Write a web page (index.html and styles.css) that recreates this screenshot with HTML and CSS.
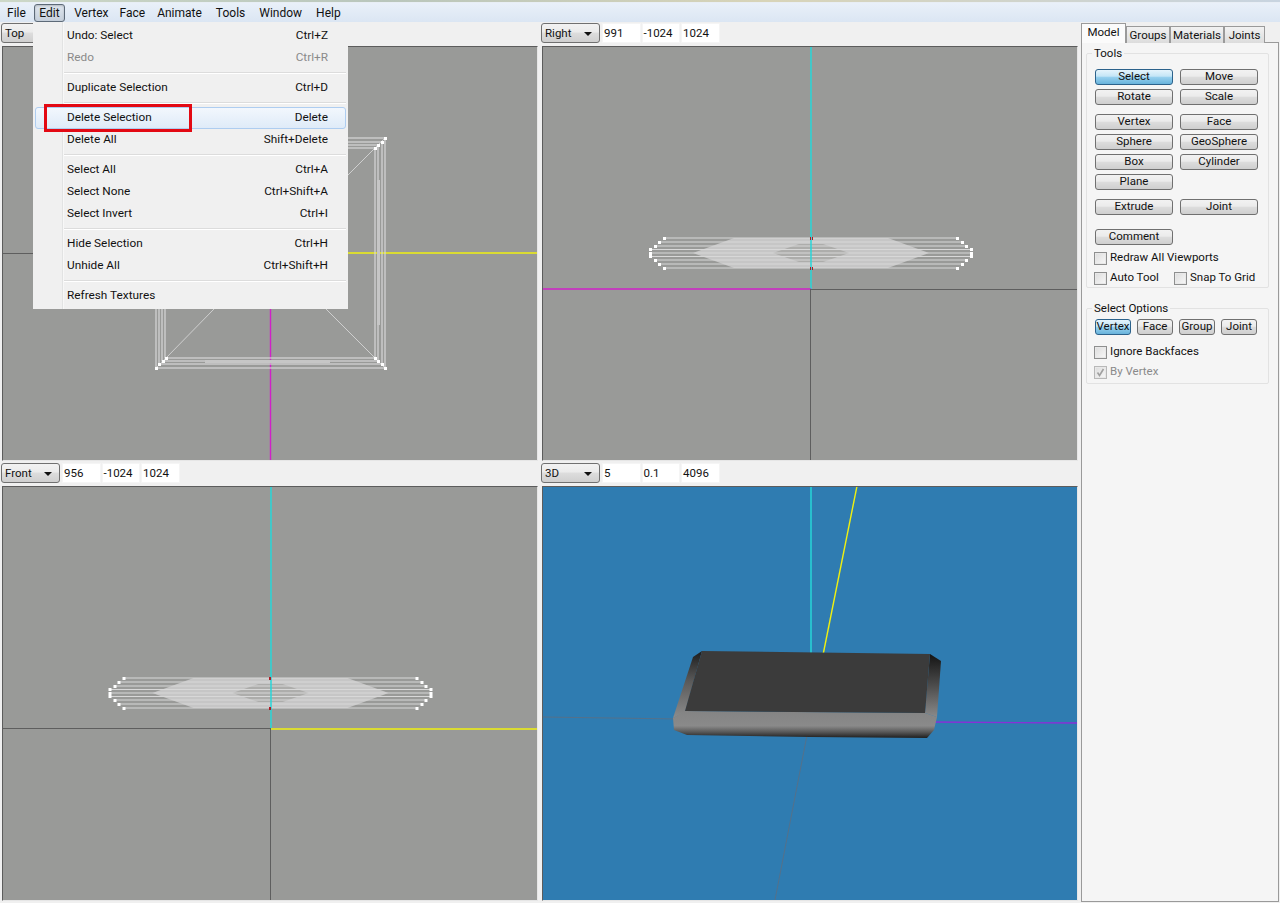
FILE: index.html
```html
<!DOCTYPE html>
<html lang="en">
<head>
<meta charset="utf-8">
<title>Model editor</title>
<link rel="stylesheet" href="styles.css">
</head>
<body>
<svg class="defs" width="0" height="0" aria-hidden="true">
  <defs>
    <g id="stadium">
      <polygon class="w-fill" points="-77,-15 77,-15 118,0 77,15 -77,15 -118,0"/>
      <polygon class="w-hole" points="-12,-9 12,-9 38,0 12,9 -12,9 -38,0"/>
      <path class="w-line" d="M-146.5-15H146.5M-151.5-11H151.5M-156-7H156M-160-3.5H160M-160 0H160M-160 3.5H160M-156 7H156M-151.5 11H151.5M-146.5 15H146.5"/>
      <path class="w-dots" d="M-148-16h3v3h-3zM145-16h3v3h-3zM-153-12h3v3h-3zM150-12h3v3h-3zM-157-8h3v3h-3zM154-8h3v3h-3zM-162-5h3v3h-3zM159-5h3v3h-3zM-162-1h3v3h-3zM159-1h3v3h-3zM-162 2h3v3h-3zM159 2h3v3h-3zM-157 6h3v3h-3zM154 6h3v3h-3zM-153 10h3v3h-3zM150 10h3v3h-3zM-148 14h3v3h-3zM145 14h3v3h-3z"/>
    </g>
    <linearGradient id="leftSide" x1="0" y1="0" x2="0" y2="1">
      <stop offset="0" stop-color="#1c1c1c"/>
      <stop offset="0.45" stop-color="#5a5a5a"/>
      <stop offset="1" stop-color="#8c8c8c"/>
    </linearGradient>
    <linearGradient id="rightSide" x1="0" y1="0" x2="0" y2="1">
      <stop offset="0" stop-color="#141414"/>
      <stop offset="0.5" stop-color="#4c4c4c"/>
      <stop offset="1" stop-color="#8a8a8a"/>
    </linearGradient>
    <linearGradient id="lip" x1="0" y1="0" x2="0" y2="1">
      <stop offset="0" stop-color="#848484"/>
      <stop offset="0.55" stop-color="#8a8a8a"/>
      <stop offset="0.78" stop-color="#585858"/>
      <stop offset="1" stop-color="#1e1e1e"/>
    </linearGradient>
  </defs>
</svg>

<div class="titlebar"></div>

<nav class="menubar">
  <span class="menu-item">File</span>
  <span class="menu-item open">Edit</span>
  <span class="menu-item m-vertex">Vertex</span>
  <span class="menu-item m-face">Face</span>
  <span class="menu-item">Animate</span>
  <span class="menu-item">Tools</span>
  <span class="menu-item">Window</span>
  <span class="menu-item">Help</span>
</nav>

<div class="dropdown">
  <div class="row"><span>Undo: Select</span><span>Ctrl+Z</span></div>
  <div class="row disabled"><span>Redo</span><span>Ctrl+R</span></div>
  <div class="sep"></div>
  <div class="row"><span>Duplicate Selection</span><span>Ctrl+D</span></div>
  <div class="sep"></div>
  <div class="row hot"><span>Delete Selection</span><span>Delete</span></div>
  <div class="row"><span>Delete All</span><span>Shift+Delete</span></div>
  <div class="sep"></div>
  <div class="row"><span>Select All</span><span>Ctrl+A</span></div>
  <div class="row"><span>Select None</span><span>Ctrl+Shift+A</span></div>
  <div class="row"><span>Select Invert</span><span>Ctrl+I</span></div>
  <div class="sep"></div>
  <div class="row"><span>Hide Selection</span><span>Ctrl+H</span></div>
  <div class="row"><span>Unhide All</span><span>Ctrl+Shift+H</span></div>
  <div class="sep"></div>
  <div class="row"><span>Refresh Textures</span></div>
</div>
<div class="callout"></div>

<main class="main">
  <section class="viewports">
    <div class="viewport">
      <div class="vp-bar">
        <div class="combo"><span>Top</span><i class="arrow"></i></div>
      </div>
      <div class="canvas">
        <svg viewBox="3 47 534 413" width="534" height="413">
          <path class="axis-dark" d="M3 253.5H270"/>
          <path class="axis-yellow" d="M270 253H537"/>
          <path class="axis-magenta" d="M270.5 253V460"/>
          <path class="w-thin" d="M375 148L214 309M166 358L214 309M375 358L326 309"/>
          <rect class="w-line" x="156" y="138" width="229" height="230"/>
          <rect class="w-line" x="159" y="142" width="223" height="222"/>
          <rect class="w-line" x="162" y="145" width="216" height="216"/>
          <rect class="w-line" x="165" y="148" width="210" height="210"/>
          <polygon class="w-fill" points="377,180 380,180 380,325 377,325"/>
          <polygon class="w-fill" points="205,360 330,360 330,363 205,363"/>
          <path class="w-thin" d="M156 368L166 358M385 368L375 358M385 138L375 148"/>
          <path class="w-dots" d="M155 367h3v3h-3zM158 363h3v3h-3zM162 360h3v3h-3zM165 357h3v3h-3zM384 367h3v3h-3zM381 363h3v3h-3zM377 360h3v3h-3zM374 357h3v3h-3zM384 137h3v3h-3zM381 141h3v3h-3zM377 144h3v3h-3zM374 147h3v3h-3z"/>
        </svg>
      </div>
    </div>

    <div class="viewport">
      <div class="vp-bar">
        <div class="combo"><span>Right</span><i class="arrow"></i></div>
        <div class="field">991</div>
        <div class="field">-1024</div>
        <div class="field">1024</div>
      </div>
      <div class="canvas">
        <svg viewBox="543 47 534 413" width="534" height="413">
          <use href="#stadium" x="811" y="253"/>
          <path class="axis-cyan" d="M811 47V289"/>
          <path class="axis-magenta" d="M543 289H811"/>
          <path class="axis-dark" d="M811 289.5H1077M810.5 289V460"/>
          <path class="w-red" d="M810 237h1v3h-1zM812 237h1v3h-1zM810 267h1v3h-1zM812 267h1v3h-1z"/>
        </svg>
      </div>
    </div>

    <div class="viewport">
      <div class="vp-bar">
        <div class="combo"><span>Front</span><i class="arrow"></i></div>
        <div class="field">956</div>
        <div class="field">-1024</div>
        <div class="field">1024</div>
      </div>
      <div class="canvas">
        <svg viewBox="3 487 534 413" width="534" height="413">
          <use href="#stadium" x="270.5" y="693"/>
          <path class="axis-cyan" d="M271 487V728"/>
          <path class="axis-dark" d="M3 728.5H271M270.5 728V900"/>
          <path class="axis-yellow" d="M271 729H537"/>
          <path class="w-red" d="M269 677h2v3h-2zM269 707h2v3h-2z"/>
        </svg>
      </div>
    </div>

    <div class="viewport">
      <div class="vp-bar">
        <div class="combo"><span>3D</span><i class="arrow"></i></div>
        <div class="field">5</div>
        <div class="field">0.1</div>
        <div class="field">4096</div>
      </div>
      <div class="canvas blue">
        <svg viewBox="543 487 534 413" width="534" height="413">
          <path class="axis-cyan" d="M811 487V660"/>
          <path class="axis-yellow" d="M857 486L822 660"/>
          <path class="axis-grey" d="M543 717L680 719"/>
          <path class="axis-purple" d="M930 722L1077 723"/>
          <path class="axis-grey" d="M808 730L775 900"/>
          <polygon fill="url(#leftSide)" points="702,651 693,657 673,718 685,712"/>
          <polygon fill="url(#rightSide)" points="930,654 941,661 937,717 925,713"/>
          <polygon fill="url(#lip)" points="685,711 925,713 937,717 934,730 927,738 810,737 687,735 674,730 673,718"/>
          <polygon class="box-top" points="702,651 930,654 925,713 685,711"/>
        </svg>
      </div>
    </div>
  </section>

  <aside class="panel">
    <div class="tabs">
      <span class="tab active">Model</span>
      <span class="tab">Groups</span>
      <span class="tab">Materials</span>
      <span class="tab">Joints</span>
    </div>
    <div class="tab-body">
      <fieldset class="group tools">
        <legend>Tools</legend>
        <div class="btn-grid">
          <button class="btn on">Select</button><button class="btn">Move</button>
          <button class="btn">Rotate</button><button class="btn">Scale</button>
        </div>
        <div class="btn-grid">
          <button class="btn">Vertex</button><button class="btn">Face</button>
          <button class="btn">Sphere</button><button class="btn">GeoSphere</button>
          <button class="btn">Box</button><button class="btn">Cylinder</button>
          <button class="btn">Plane</button>
        </div>
        <div class="btn-grid wide-gap">
          <button class="btn">Extrude</button><button class="btn">Joint</button>
        </div>
        <div class="btn-grid">
          <button class="btn">Comment</button>
        </div>
        <div class="check-row first"><label class="check"><i class="box"></i>Redraw All Viewports</label></div>
        <div class="check-row"><label class="check auto"><i class="box"></i>Auto Tool</label><label class="check"><i class="box"></i>Snap To Grid</label></div>
      </fieldset>
      <fieldset class="group options">
        <legend>Select Options</legend>
        <div class="opt-row">
          <button class="btn on">Vertex</button><button class="btn">Face</button><button class="btn">Group</button><button class="btn">Joint</button>
        </div>
        <div class="check-row ignore"><label class="check"><i class="box"></i>Ignore Backfaces</label></div>
        <div class="check-row"><label class="check dim"><i class="box"><svg viewBox="0 0 11 11" width="11" height="11"><path d="M2.5 5.5L4.5 8.5L8.5 2" fill="none" stroke="#a0a0a0" stroke-width="1.6"/></svg></i>By Vertex</label></div>
      </fieldset>
    </div>
  </aside>
</main>
</body>
</html>
```
FILE: styles.css
```css
* { box-sizing: border-box; }
html, body { margin: 0; padding: 0; height: 903px; overflow: hidden; }
body {
  background: #f0f0f0;
  color: #111;
  font: 11.5px/1 Roboto, "Open Sans", sans-serif;
  display: flex;
  flex-direction: column;
}
.defs { position: absolute; }

.titlebar {
  height: 3px;
  background: linear-gradient(90deg, #cdd8c8 0%, #b9c6bc 30%, #d8d4b8 60%, #c8d4e0 100%);
  border-bottom: 1px solid #e8eef5;
}
.menubar {
  height: 19px;
  display: flex;
  padding-left: 7px;
  background: linear-gradient(#e9f0f9, #dbe6f3);
  align-items: stretch;
  font-size: 12px;
}
.menu-item { display: flex; align-items: center; margin-right: 14px; }
.menu-item.open {
  margin: 1px 9px 0 -6px;
  padding: 0 4.5px;
  border: 1px solid #5d6a78;
  border-radius: 3px;
  background: linear-gradient(#dfe6ee, #c6d0dc);
  box-shadow: inset 0 1px 2px rgba(0, 0, 0, .2);
}
.menu-item.m-vertex { margin-right: 11px; }
.menu-item.m-face { margin-right: 12px; }

.dropdown {
  position: absolute;
  left: 33px;
  top: 22px;
  width: 315px;
  height: 287px;
  padding: 3px 2px 2px;
  background: linear-gradient(90deg, #f0f0f0 0, #f0f0f0 29px, #e2e3e3 29px, #e2e3e3 30px, #fff 30px, #f0f0f0 31px);
  z-index: 5;
  font-size: 11.8px;
}
.row {
  height: 22px;
  display: flex;
  justify-content: space-between;
  align-items: center;
  padding: 0 18px 0 32px;
}
.row.disabled { color: #8a8a8a; }
.row.hot {
  padding: 0 17px 0 31px;
  border: 1px solid #aecdf0;
  border-radius: 3px;
  background: linear-gradient(#f2f7fd, #dfebf8);
}
.sep { height: 8px; margin-left: 29px; position: relative; }
.sep::after {
  content: "";
  position: absolute;
  left: 0; right: 0; top: 3px;
  height: 2px;
  background: linear-gradient(#dcdcdc 50%, #fff 50%);
}
.callout {
  position: absolute;
  left: 44px; top: 104px;
  width: 148px; height: 28px;
  border: 3px solid #e30913;
  z-index: 6;
}

.main { flex: 1; display: flex; min-height: 0; }
.viewports {
  width: 1080px;
  display: grid;
  grid-template-columns: 540px 540px;
  grid-template-rows: 440px 441px;
}
.viewport { padding: 1px 0 0 1px; display: flex; flex-direction: column; }
.vp-bar { height: 20px; display: flex; gap: 1px; }
.combo {
  width: 59px;
  display: flex;
  align-items: center;
  justify-content: space-between;
  padding: 1px 7px 0 3px;
  border: 1px solid #707070;
  border-radius: 3px;
  background: linear-gradient(#f2f2f2 0, #ebebeb 45%, #dddddd 50%, #cfcfcf 100%);
  margin-right: 1px;
}
.arrow {
  width: 0; height: 0;
  border: 4px solid transparent;
  border-top: 4px solid #111;
  border-bottom: 0;
}
.field {
  width: 38.5px;
  background: #fff;
  padding: 4px 0 0 1px;
  border: 1px solid #f5f5f5;
}
.canvas {
  margin: 3px 0 0 1px;
  height: 415px;
  width: 536px;
  border: 1px solid #5c5c5c;
  border-right-color: #e6e6e6;
  border-bottom-color: #e6e6e6;
  background: #999a98;
  overflow: hidden;
  display: flex;
}
.canvas.blue { background: #2f7cb1; }
.canvas svg { display: block; flex: none; }

.w-fill { fill: #c6c6c6; stroke: none; }
.w-hole { fill: #adadab; }
.w-line { fill: none; stroke: #d8d8d8; stroke-width: 1.2; }
.w-thin { fill: none; stroke: #cfcfcf; stroke-width: 1; }
.w-dots { fill: #fff; }
.w-red { fill: #b01a24; }
.axis-cyan, .axis-yellow, .axis-magenta, .axis-dark, .axis-grey, .axis-purple { fill: none; stroke-width: 1; }
.axis-cyan { stroke: #27d6d8; stroke-width: 1.5; }
.axis-yellow { stroke: #f0f010; stroke-width: 1.4; }
.axis-magenta { stroke: #d020c8; stroke-width: 1.4; }
.axis-dark { stroke: #5e5e5e; }
.axis-grey { stroke: #55718a; }
.axis-purple { stroke: #8a2fd8; stroke-width: 1.4; }
.box-top { fill: #3b3b3b; }

.panel {
  width: 200px;
  padding: 1px;
  display: flex;
  flex-direction: column;
}
.tabs {
  height: 20px;
  display: grid;
  grid-template-columns: 45px 44px 54px 41px;
  justify-content: start;
  align-items: end;
  position: relative;
  z-index: 1;
}
.tab {
  height: 17px;
  padding-top: 3px;
  border: 1px solid #9a9a9a;
  border-bottom: 0;
  background: linear-gradient(#f2f2f2, #dcdcdc);
  text-align: center;
  white-space: nowrap;
}
.tab.active {
  height: 20px;
  background: #fbfbfb;
}
.tab-body {
  flex: 1;
  margin-top: -1px;
  border: 1px solid #9a9a9a;
  padding: 4px 9px 0 4px;
  background: #f5f5f5;
  display: flex;
  flex-direction: column;
}
.group {
  margin: 0;
  border: 1px solid #e2e2e2;
  border-radius: 2px;
  min-width: 0;
  padding: 0 0 0 8px;
}
.group legend { padding: 0 2px; margin-left: -3px; line-height: 12px; }
.tools { height: 241px; padding-top: 10px; }
.options { height: 82px; margin-top: 14px; padding-top: 5px; }
.btn-grid {
  display: grid;
  grid-template-columns: 78px 78px;
  column-gap: 7px;
  row-gap: 4px;
  margin-bottom: 9px;
}
.btn-grid.wide-gap { margin-bottom: 14px; }
.btn {
  height: 16px;
  padding: 0;
  border: 1px solid #707070;
  border-radius: 3px;
  background: linear-gradient(#f2f2f2 0, #ebebeb 45%, #dddddd 50%, #cfcfcf 100%);
  font: inherit;
  color: #111;
  display: flex;
  align-items: center;
  justify-content: center;
}
.btn.on {
  border-color: #2c628b;
  background: linear-gradient(#e5f4fc 0, #c4e5f6 45%, #98d1ef 50%, #68b3db 100%);
}
.check-row { display: flex; height: 20px; align-items: center; margin-left: -1px; }
.check-row.first { margin-top: -6px; }
.check { display: flex; align-items: center; gap: 3px; }
.check.auto { width: 80px; }
.check.dim { color: #8a8a8a; }
.box {
  width: 13px; height: 13px;
  border: 1px solid #8e8f8f;
  background: linear-gradient(135deg, #dcdcdc, #f8f8f8);
  box-shadow: inset 0 0 0 1px #e8e8e8;
  display: block;
}
.dim .box { border-color: #b8b8b8; }
.box svg { display: block; }
.opt-row { display: flex; gap: 6px; }
.opt-row .btn { width: 36px; }
.check-row.ignore { margin-top: 7px; }
```
